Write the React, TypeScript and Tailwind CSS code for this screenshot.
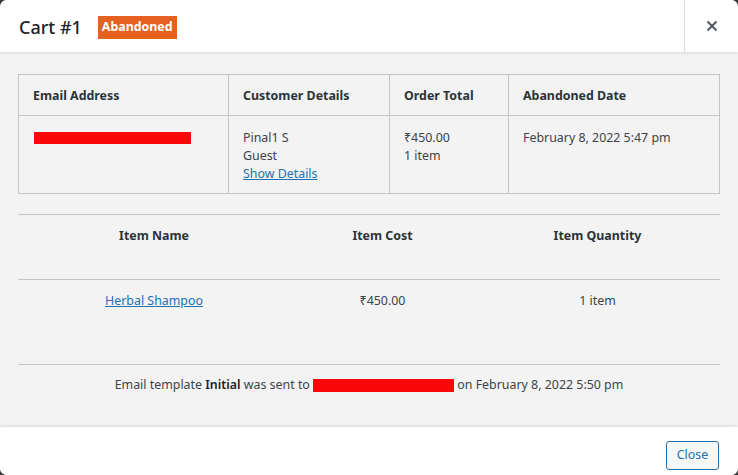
import React from "react";

const font = { fontFamily: '"Noto Sans", "Open Sans", sans-serif' };

export default function App() {
  return (
    <div className="w-[738px] h-[475px] bg-[#3a3a3a] overflow-hidden" style={font}>
      <div className="w-full h-full rounded-[7px] overflow-hidden flex flex-col bg-white text-[12.4px] text-[#3c434a]">
        {/* Header */}
        <div className="h-[52px] flex items-stretch bg-white shadow-[0_1px_3px_rgba(0,0,0,0.12)] relative z-10">
          <div className="flex-1 flex items-center pl-[19px] gap-[16px] pt-[2px]">
            <span className="text-[18px] font-medium text-[#1d2327] leading-none">Cart #1</span>
            <span className="bg-[#e4611f] text-white font-bold text-[12.4px] leading-none px-[4px] h-[23px] flex items-center">Abandoned</span>
          </div>
          <div className="w-[54px] border-l border-[#dcdcde] flex items-center justify-center">
            <svg width="12" height="12" viewBox="0 0 12 12">
              <path d="M1.5 1.5 L10.5 10.5 M10.5 1.5 L1.5 10.5" stroke="#50575e" strokeWidth="2" />
            </svg>
          </div>
        </div>

        {/* Body */}
        <div className="flex-1 bg-[#f3f3f3] px-[18px] pt-[22px] flex flex-col">
          {/* Table 1 */}
          <div className="border border-[#c3c4c7]">
            <div className="grid grid-cols-[209px_161px_119px_1fr] h-[41px] border-b border-[#c3c4c7] font-bold text-[#2c3338]">
              <div className="flex items-center pl-[14px] pt-[3px]">Email Address</div>
              <div className="flex items-center pl-[14px] pt-[3px] border-l border-[#c3c4c7]">Customer Details</div>
              <div className="flex items-center pl-[14px] pt-[3px] border-l border-[#c3c4c7]">Order Total</div>
              <div className="flex items-center pl-[14px] pt-[3px] border-l border-[#c3c4c7]">Abandoned Date</div>
            </div>
            <div className="grid grid-cols-[209px_161px_119px_1fr] h-[77px] leading-[18px]">
              <div className="pl-[15px] pt-[16px]">
                <div className="w-[157px] h-[12px] bg-[#f80808]" />
              </div>
              <div className="pl-[14px] pt-[13px] border-l border-[#c3c4c7]">
                <div>Pinal1 S</div>
                <div>Guest</div>
                <div className="text-[#2271b1] underline">Show Details</div>
              </div>
              <div className="pl-[14px] pt-[13px] border-l border-[#c3c4c7]">
                <div>₹450.00</div>
                <div>1 item</div>
              </div>
              <div className="pl-[14px] pt-[13px] border-l border-[#c3c4c7]">February 8, 2022 5:47 pm</div>
            </div>
          </div>

          {/* Items table */}
          <div className="mt-[20px] border-t border-[#c3c4c7]">
            <div className="grid grid-cols-[272px_185px_1fr] h-[65px] border-b border-[#c3c4c7] font-bold text-[#2c3338] leading-[18px] pt-[12px] text-center">
              <div>Item Name</div>
              <div>Item Cost</div>
              <div>Item Quantity</div>
            </div>
            <div className="grid grid-cols-[272px_185px_1fr] h-[85px] border-b border-[#c3c4c7] leading-[18px] pt-[12px] text-center">
              <div><span className="text-[#2271b1] underline">Herbal Shampoo</span></div>
              <div>₹450.00</div>
              <div>1 item</div>
            </div>
            <div className="text-center pt-[11px] leading-[18px] flex items-center justify-center">
              <span>Email template <span className="font-semibold text-[#1d2327]">Initial</span> was sent to&nbsp;</span>
              <span className="inline-block w-[141px] h-[13px] bg-[#f80808]" />
              <span>&nbsp;on February 8, 2022 5:50 pm</span>
            </div>
          </div>
        </div>

        {/* Footer */}
        <div className="h-[48px] bg-white shadow-[0_-1px_3px_rgba(0,0,0,0.12)] relative z-10 flex justify-end pr-[19px] pt-[14px]">
          <button className="h-[29px] w-[53px] border border-[#2271b1] rounded-[3px] bg-[#f6f7f7] text-[#2271b1] text-[12.4px] leading-none">Close</button>
        </div>
      </div>
    </div>
  );
}
